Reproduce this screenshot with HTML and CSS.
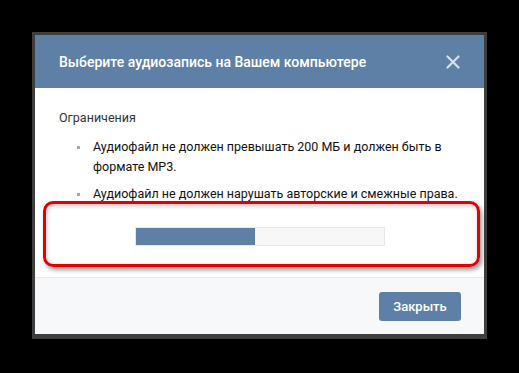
FILE: index.html
```html
<!DOCTYPE html>
<html lang="ru">
<head>
  <meta charset="UTF-8">
  <meta name="viewport" content="width=device-width, initial-scale=1.0">
  <title>Загрузка аудиозаписи</title>
  <link rel="stylesheet" href="styles.css">
</head>
<body>
  <div class="dialog">
    <header class="dialog-head">
      <h1 class="dialog-title">Выберите аудиозапись на Вашем компьютере</h1>
      <span class="close">
        <svg width="14" height="14" viewBox="0 0 14 14"><path d="M1.5 1.5L12.5 12.5M12.5 1.5L1.5 12.5" stroke="#d6e0ec" stroke-width="2.2" stroke-linecap="round"/></svg>
      </span>
    </header>
    <main class="dialog-body">
      <p class="limits-title">Ограничения</p>
      <ul class="limits">
        <li>Аудиофайл не должен превышать 200 МБ и должен быть в формате MP3.</li>
        <li>Аудиофайл не должен нарушать авторские и смежные права.</li>
      </ul>
      <div class="upload">
        <div class="progress">
          <div class="progress-inner" style="width: 48%"></div>
        </div>
        <div class="highlight"></div>
      </div>
    </main>
    <footer class="dialog-foot">
      <button class="btn">Закрыть</button>
    </footer>
  </div>
</body>
</html>
```

FILE: styles.css
```css
body {
  margin: 0;
  background: #000;
  font-family: Roboto, "Open Sans", sans-serif;
}
.dialog {
  margin: 32px 0 0 32px;
  width: 449px;
  border: 3px solid #3e3e3e;
  border-bottom-width: 5px;
  background: #fff;
}
.dialog-head {
  height: 53px;
  background: #5e80a7;
  display: flex;
  align-items: center;
  justify-content: space-between;
  padding: 0 24px 0 24px;
}
.dialog-title {
  margin: 0;
  font-size: 14px;
  font-weight: 500;
  color: #fff;
  padding-top: 1px;
}
.close {
  display: flex;
}
.dialog-body {
  padding: 20px 24px 0;
  color: #111;
  font-size: 12.5px;
  line-height: 20px;
}
.limits-title {
  margin: 0 0 9px;
  color: #333;
}
.limits {
  margin: 0;
  padding: 0 0 0 34px;
  list-style: none;
}
.limits li {
  position: relative;
  margin-bottom: 7px;
}
.limits li:last-child {
  margin-bottom: 0;
}
.limits li::before {
  content: "";
  position: absolute;
  left: -16px;
  top: 9px;
  width: 3px;
  height: 3px;
  background: #a2a9b2;
}
.upload {
  position: relative;
  margin: 0 -24px;
  padding: 23px 0 31px;
  display: flex;
  justify-content: center;
}
.progress {
  width: 248px;
  height: 17px;
  border: 1px solid #e7e8ec;
  background: #f7f7f8;
}
.progress-inner {
  height: 100%;
  background: #5e80a7;
}
.highlight {
  position: absolute;
  left: 8px;
  right: 4px;
  top: -3px;
  bottom: 10px;
  border: 3px solid #e20000;
  border-radius: 10px;
  box-shadow: 2px 3px 4px rgba(0, 0, 0, 0.4), inset 1px 2px 4px rgba(0, 0, 0, 0.22);
}
.dialog-foot {
  border-top: 1px solid #e7e8ec;
  background: #f7f8fa;
  display: flex;
  justify-content: flex-end;
  padding: 14px 23px 13px;
}
.btn {
  width: 82px;
  height: 29px;
  border: 0;
  border-radius: 3px;
  background: #5e80a7;
  color: #fff;
  font-family: Roboto, sans-serif;
  font-size: 13px;
  font-weight: 500;
}
```
